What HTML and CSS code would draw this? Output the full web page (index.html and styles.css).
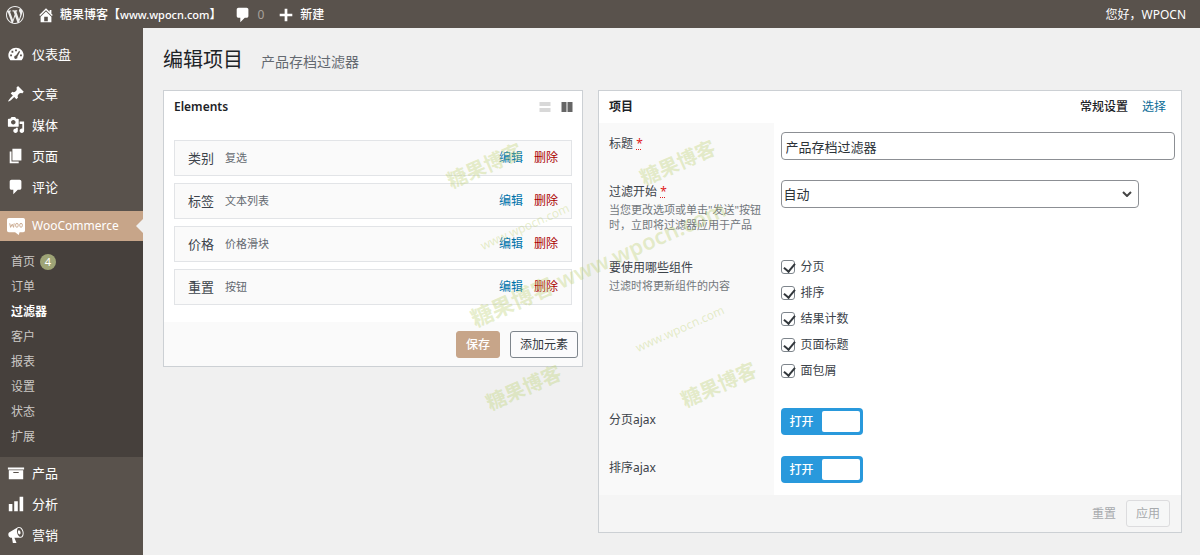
FILE: index.html
```html
<!DOCTYPE html>
<html lang="zh-CN">
<head>
<meta charset="utf-8">
<title>编辑项目</title>
<link rel="stylesheet" href="styles.css">
</head>
<body>
<header class="topbar">
  <a class="topbar-item" href="#" aria-label="WordPress"><svg class="wp-logo" viewBox="0 0 20 20"><path d="M20 10c0-5.51-4.49-10-10-10C4.48 0 0 4.49 0 10c0 5.52 4.48 10 10 10 5.51 0 10-4.48 10-10zM7.78 15.37L4.37 6.22c.55-.02 1.17-.08 1.17-.08.5-.06.44-1.13-.06-1.11 0 0-1.45.11-2.37.11-.18 0-.37 0-.58-.01C4.12 2.69 6.87 1.11 10 1.11c2.33 0 4.45.87 6.05 2.34-.68-.11-1.65.39-1.65 1.58 0 .74.45 1.36.9 2.1.35.61.55 1.36.55 2.46 0 1.49-1.4 5-1.4 5l-3.03-8.37c.54-.02.82-.17.82-.17.5-.05.44-1.25-.06-1.22 0 0-1.44.12-2.38.12-.87 0-2.33-.12-2.33-.12-.5-.03-.56 1.2-.06 1.22l.92.08 1.26 3.41zM17.41 10c.24-.64.74-1.87.43-4.25.7 1.29 1.05 2.71 1.05 4.25 0 3.29-1.73 6.24-4.4 7.78.97-2.59 1.94-5.2 2.92-7.78zM6.1 18.09C3.12 16.65 1.11 13.53 1.11 10c0-1.3.23-2.48.72-3.59C3.25 10.3 4.67 14.2 6.1 18.09zm4.03-6.63l2.58 6.98c-.86.29-1.76.45-2.71.45-.79 0-1.57-.11-2.29-.33.81-2.38 1.62-4.74 2.42-7.1z"/></svg></a>
  <a class="topbar-item" href="#"><svg class="icon" viewBox="0 0 20 20"><path d="M16 8.5l1.53 1.53-1.06 1.06L10 4.6l-6.47 6.49-1.06-1.06L10 2.5l4 4v-2h2v4zm-6-2.46l6 5.99V18H4v-5.97zM12 17v-5H8v5h4z"/></svg><span>糖果博客【<span class="domain">www.wpocn.com</span>】</span></a>
  <a class="topbar-item topbar-comments" href="#"><svg class="icon" viewBox="0 0 20 20"><path d="M5 2h9c1.1 0 2 .9 2 2v7c0 1.1-.9 2-2 2h-2l-5 5v-5H5c-1.1 0-2-.9-2-2V4c0-1.1.9-2 2-2z"/></svg><span class="count">0</span></a>
  <a class="topbar-item" href="#"><svg class="icon" viewBox="0 0 20 20"><path d="M8.500 3h3v5.500H17v3h-5.500V17h-3v-5.500H3v-3h5.500z"/></svg>新建</a>
  <a class="topbar-item topbar-user" href="#">您好，WPOCN</a>
</header>
<div class="layout">
  <nav class="sidebar">
    <ul class="menu">
      <li><a class="menu-link" href="#"><svg class="icon" viewBox="0 0 20 20"><path fill-rule="evenodd" d="M3.760 17h12.480A8.500 8.500 0 0 0 18.500 11.500C18.500 6.700 14.700 3 10 3S1.500 6.700 1.500 11.500c0 2.100.9 4 2.260 5.500zM9 5h2v2H9zM5 6.500h2v2H5zM13.500 6.500l1 1-3 5.500a1.800 1.800 0 1 1-1.500-1.200zM3.500 10.500h2v2h-2zM14.500 10.500h2v2h-2z"/></svg>仪表盘</a></li>
      <li class="gap-top"><a class="menu-link" href="#"><svg class="icon" viewBox="0 0 20 20"><path d="M10.440 3.020l1.820-1.820 6.360 6.350-1.830 1.820c-1.050-.68-2.480-.57-3.410.36l-.75.75c-.92.93-1.040 2.350-.35 3.410l-1.830 1.820-2.410-2.410-2.800 2.790c-.42.42-3.380 2.710-3.800 2.290s1.860-3.390 2.280-3.810l2.790-2.790L4.100 9.360l1.830-1.820c1.050.69 2.480.57 3.400-.36l.75-.75c.93-.92 1.050-2.350.36-3.410z"/></svg>文章</a></li>
      <li><a class="menu-link" href="#"><svg class="icon" viewBox="0 0 20 20"><path d="M13 11V4c0-.55-.45-1-1-1h-1.670L9 1H5L3.670 3H2c-.55 0-1 .45-1 1v7c0 .55.45 1 1 1h10c.55 0 1-.45 1-1zM7 4.500c1.380 0 2.500 1.120 2.500 2.500S8.380 9.500 7 9.500 4.500 8.380 4.500 7 5.620 4.500 7 4.500zM14 6h5v10.500c0 1.380-1.120 2.500-2.500 2.500S14 17.880 14 16.500s1.120-2.500 2.500-2.500c.17 0 .34.02.5.05V9h-3V6zm-4 8.050V13h2v3.500c0 1.380-1.120 2.500-2.500 2.500S7 17.880 7 16.500 8.120 14 9.500 14c.17 0 .34.02.5.05z"/></svg>媒体</a></li>
      <li><a class="menu-link" href="#"><svg class="icon" viewBox="0 0 20 20"><path d="M6 15V2h10v13H6zm-1 1h8v2H3V5h2v11z"/></svg>页面</a></li>
      <li><a class="menu-link" href="#"><svg class="icon" viewBox="0 0 20 20"><path d="M5 2h9c1.100 0 2 .9 2 2v7c0 1.100-.9 2-2 2h-2l-5 5v-5H5c-1.100 0-2-.9-2-2V4c0-1.100.9-2 2-2z"/></svg>评论</a></li>
      <li class="gap-top">
        <a class="menu-link current" href="#"><svg class="icon" viewBox="0 0 20 20"><path d="M2 1h16q2 0 2 2v12q0 2-2 2h-4l-1 3-4-3H2q-2 0-2-2V3q0-2 2-2z"/><path class="woo-mark" d="M3 7l1 4.500 1.800-3.500 1.500 3.500L8 7"/><ellipse class="woo-mark" cx="11" cy="9.200" rx="1.500" ry="2.200"/><ellipse class="woo-mark" cx="15.600" cy="9.200" rx="1.500" ry="2.200"/></svg>WooCommerce</a>
        <ul class="submenu">
          <li><a href="#">首页<span class="badge">4</span></a></li>
          <li><a href="#">订单</a></li>
          <li><a class="selected" href="#">过滤器</a></li>
          <li><a href="#">客户</a></li>
          <li><a href="#">报表</a></li>
          <li><a href="#">设置</a></li>
          <li><a href="#">状态</a></li>
          <li><a href="#">扩展</a></li>
        </ul>
      </li>
      <li><a class="menu-link" href="#"><svg class="icon" viewBox="0 0 20 20"><path d="M19 4v2H1V4h18zM2 7h16v10H2V7zm11 3V9H7v1h6z"/></svg>产品</a></li>
      <li><a class="menu-link" href="#"><svg class="icon" viewBox="0 0 20 20"><path d="M18 18V2h-4v16h4zm-6 0V7H8v11h4zm-6 0v-8H2v8h4z"/></svg>分析</a></li>
      <li><a class="menu-link" href="#"><svg class="icon" viewBox="0 0 20 20"><path d="M18.150 5.940c.46 1.620.38 3.220-.02 4.480-.42 1.280-1.260 2.180-2.300 2.480-.16.06-.26.06-.4.06-.06.02-.12.02-.18.02-.06.02-.14.02-.22.02h-6.800l2.220 5.500c.02.14-.06.26-.14.34-.08.1-.24.16-.34.16H6.950c-.1 0-.26-.06-.34-.16-.08-.08-.16-.2-.14-.34l-1-5.500H4.250l-.02-.02c-.5.06-1.080-.18-1.540-.62s-.88-1.080-1.060-1.880c-.24-.8-.2-1.560-.02-2.200.18-.62.58-1.080 1.060-1.300l.02-.02 9-5.400c.1-.06.18-.1.24-.16.06-.04.14-.08.24-.12.16-.08.28-.12.5-.18 1.040-.3 2.240.1 3.220.98s1.840 2.240 2.260 3.860zm-2.580 5.980h-.02c.4-.1.74-.34 1.040-.7.58-.7.86-1.760.86-3.040 0-.64-.1-1.300-.28-1.980-.34-1.360-1.020-2.500-1.780-3.240s-1.680-1.100-2.460-.88c-.82.22-1.400.96-1.700 2-.32 1.040-.28 2.360.06 3.720.38 1.360 1 2.500 1.800 3.240.78.740 1.620 1.100 2.480.88zm-2.540-7.080c.22-.04.42-.02.62.04.38.16.76.48 1.020 1s.42 1.200.42 1.780c0 .3-.04.56-.12.8-.18.48-.44.84-.86.94-.34.1-.8-.06-1.140-.4s-.64-.86-.78-1.500c-.18-.62-.12-1.240.02-1.720s.48-.84.82-.94z"/></svg>营销</a></li>
    </ul>
  </nav>
  <main class="content">
    <div class="page-head">
      <h1>编辑项目</h1>
      <span class="page-name">产品存档过滤器</span>
    </div>
    <div class="panels">
      <section class="panel">
        <div class="panel-head">
          <h2>Elements</h2>
          <div class="view-switch">
            <button type="button" class="view" aria-label="单列"><svg viewBox="0 0 11 10"><path d="M0 0h11v4H0zM0 6h11v4H0z"/></svg></button>
            <button type="button" class="view view-on" aria-label="双列"><svg viewBox="0 0 11 10"><path d="M0 0h5v10H0zM6 0h5v10H6z"/></svg></button>
          </div>
        </div>
        <ul class="elements">
          <li class="element"><span class="element-name">类别</span><span class="element-type">复选</span><a class="edit" href="#">编辑</a><a class="remove" href="#">删除</a></li>
          <li class="element"><span class="element-name">标签</span><span class="element-type">文本列表</span><a class="edit" href="#">编辑</a><a class="remove" href="#">删除</a></li>
          <li class="element"><span class="element-name">价格</span><span class="element-type">价格滑块</span><a class="edit" href="#">编辑</a><a class="remove" href="#">删除</a></li>
          <li class="element"><span class="element-name">重置</span><span class="element-type">按钮</span><a class="edit" href="#">编辑</a><a class="remove" href="#">删除</a></li>
        </ul>
        <div class="panel-foot">
          <button type="button" class="btn btn-primary">保存</button>
          <button type="button" class="btn">添加元素</button>
        </div>
      </section>
      <form class="panel">
        <div class="panel-head">
          <h2>项目</h2>
          <div class="tabs"><a class="tab-on" href="#">常规设置</a><a href="#">选择</a></div>
        </div>
        <div class="row">
          <div class="row-label"><label for="title">标题 <abbr title="必填">*</abbr></label></div>
          <div class="row-field"><input class="text" id="title" type="text" value="产品存档过滤器"></div>
        </div>
        <div class="row row-select">
          <div class="row-label"><label for="start">过滤开始 <abbr title="必填">*</abbr></label><p>当您更改选项或单击"发送"按钮时，立即将过滤器应用于产品</p></div>
          <div class="row-field select-field"><select class="text" id="start"><option>自动</option></select><svg class="chevron" viewBox="0 0 10 6"><path d="M1 1l4 4 4-4"/></svg></div>
        </div>
        <div class="row row-checks" role="group" aria-labelledby="parts">
          <div class="row-label"><span id="parts">要使用哪些组件</span><p>过滤时将更新组件的内容</p></div>
          <div class="row-field">
            <label class="check"><input type="checkbox" checked>分页</label>
            <label class="check"><input type="checkbox" checked>排序</label>
            <label class="check"><input type="checkbox" checked>结果计数</label>
            <label class="check"><input type="checkbox" checked>页面标题</label>
            <label class="check"><input type="checkbox" checked>面包屑</label>
          </div>
        </div>
        <div class="row">
          <div class="row-label"><label for="paging">分页ajax</label></div>
          <div class="row-field"><label class="toggle">打开<input id="paging" type="checkbox" checked></label></div>
        </div>
        <div class="row">
          <div class="row-label"><label for="sorting">排序ajax</label></div>
          <div class="row-field"><label class="toggle">打开<input id="sorting" type="checkbox" checked></label></div>
        </div>
        <div class="panel-foot foot-settings">
          <button type="button" class="btn-text" disabled>重置</button>
          <button type="button" class="btn" disabled>应用</button>
        </div>
      </form>
    </div>
  </main>
</div>
<div class="marks" aria-hidden="true">
  <span class="mark mark-a">糖果博客</span>
  <span class="mark mark-b">糖果博客</span>
  <span class="mark mark-c">糖果博客 www.wpocn.com</span>
  <span class="mark mark-d">糖果博客</span>
  <span class="mark mark-e">糖果博客</span>
  <span class="mark mark-small mark-f">www.wpocn.com</span>
  <span class="mark mark-small mark-g">www.wpocn.com</span>
</div>
</body>
</html>
```
FILE: styles.css
```css
* { box-sizing: border-box; }
body {
  margin: 0;
  min-height: 100vh;
  display: flex;
  flex-direction: column;
  position: relative;
  background: #f0f0f0;
  color: #3c434a;
  font: 12px/16px "Noto Sans", "Noto Sans CJK SC", sans-serif;
}
ul, h1, h2, p { margin: 0; padding: 0; }
ul { list-style: none; }
a { color: inherit; text-decoration: none; }
button, input, select { font: inherit; color: inherit; margin: 0; }

.icon { width: 18px; height: 18px; flex: none; fill: #fff; }

.topbar {
  display: flex;
  align-items: center;
  gap: 13px;
  height: 28px;
  padding: 0 14px 0 6px;
  background: #59524c;
  color: #fff;
}
.topbar-item { display: flex; align-items: center; gap: 5px; padding-top: 1px; font-weight: 500; }
.topbar-user { margin-left: auto; font-weight: 400; }
.domain { font-size: 11px; }
.wp-logo { width: 18px; height: 18px; fill: #eee; }
.count { color: #a8a29c; font-weight: 400; }

.layout { flex: 1; display: flex; }
.sidebar { flex: none; width: 143px; background: #59524c; }
.menu { padding-top: 10px; }
.gap-top { padding-top: 9px; }
.menu-link {
  display: flex;
  align-items: center;
  gap: 7px;
  height: 31px;
  padding-left: 7px;
  color: #fff;
  font-size: 13px;
}
.current { position: relative; height: 30px; background: #c7a589; font-size: 12px; }
.current::after {
  content: "";
  position: absolute;
  right: 0;
  top: 8px;
  border: 7px solid transparent;
  border-left: 0;
  border-right-color: #f0f0f0;
}
.woo-mark { fill: none; stroke: #c7a589; stroke-width: 1; }
.submenu { padding: 8px 0; background: #46403c; color: #cbc8c5; }
.submenu a { display: flex; align-items: center; gap: 5px; height: 25px; padding-left: 11px; }
.submenu .selected { color: #fff; font-weight: 700; }
.badge {
  width: 16px;
  height: 16px;
  border-radius: 8px;
  background: #9ea476;
  color: #fff;
  font-size: 11px;
  text-align: center;
}

.content { flex: 1; padding: 17px 18px 22px 20px; }
.page-head { display: flex; align-items: baseline; gap: 18px; height: 45px; }
.page-head h1 { color: #1d2327; font-size: 20px; line-height: 30px; font-weight: 400; }
.page-name { color: #646970; font-size: 14px; }
.panels { display: grid; grid-template-columns: 420fr 584fr; gap: 15px; align-items: start; }
.panel { border: 1px solid #ccd0d4; background: #fff; min-width: 0; }
.panel-head {
  display: flex;
  align-items: center;
  justify-content: space-between;
  height: 32px;
  padding: 0 15px 0 10px;
}
.panel-head h2 { color: #1d2327; font-size: 12px; font-weight: 600; }
.view-switch { display: flex; gap: 10px; margin-right: -6px; }
.view { display: flex; padding: 0; border: 0; background: none; }
.view svg { width: 12px; height: 10px; fill: #d8d8d8; }
.view-on svg { fill: #666; }
.tabs { display: flex; gap: 14px; color: #0a6b96; }
.tab-on { color: #1d2327; font-weight: 500; }

.elements { display: grid; gap: 7px; padding: 17px 10px; }
.element {
  display: flex;
  align-items: center;
  gap: 11px;
  height: 36px;
  padding: 0 13px;
  border: 1px solid #e2e4e7;
  background: #fafafa;
}
.element-name { font-size: 13px; }
.element-type { flex: 1; font-size: 11px; color: #646970; }
.edit { color: #0073aa; }
.remove { color: #a00; }

.panel-foot {
  display: flex;
  align-items: center;
  justify-content: flex-end;
  gap: 10px;
  padding: 9px 4px 8px;
  background: #fafafa;
}
.btn {
  height: 27px;
  padding: 0 9px;
  border: 1px solid #7e858c;
  border-radius: 3px;
  background: #fbfbfc;
  color: #32373c;
}
.btn-primary { border-color: #c7a589; background: #c7a589; color: #fff; font-weight: 500; }
.foot-settings { padding: 5px 11px 5px; background: #f5f5f5; }
.btn:disabled { border-color: #dcdcde; background: #f6f7f7; color: #a7aaad; }
.btn-text { padding: 0; border: 0; background: none; }
.btn-text:disabled { color: #a7aaad; }

.row { display: grid; grid-template-columns: 30% 1fr; min-height: 48px; }
.row-label { padding: 13px 8px 0 10px; background: #f9f9f9; }
.row-field { padding: 9px 6px 0 7px; }
.row-label abbr { color: #e02020; text-decoration: underline dotted; }
.row-label p { margin-top: 2px; color: #72777c; font-size: 11px; line-height: 15px; }
.row-select { min-height: 76px; }
.row-checks { min-height: 152px; }
.row-checks .row-field { padding-top: 7px; }
.text {
  display: block;
  width: 100%;
  height: 28px;
  padding: 0 4px;
  border: 1px solid #8c8f94;
  border-radius: 4px;
  background: #fff;
  color: #2c3338;
  font-size: 13px;
}
.select-field { display: flex; align-items: flex-start; padding-right: 42px; }
select.text { appearance: none; padding: 0 2px; }
.chevron {
  flex: none;
  width: 10px;
  height: 6px;
  margin: 11px 7px 0 -17px;
  fill: none;
  stroke: #444;
  stroke-width: 2;
  pointer-events: none;
}
.check { display: flex; align-items: center; gap: 6px; height: 26px; }
.check input {
  appearance: none;
  width: 14px;
  height: 14px;
  border: 1px solid #7e858c;
  border-radius: 3px;
}
.check input:checked::before {
  content: "";
  display: block;
  width: 5px;
  height: 9px;
  margin-left: 4px;
  border: solid #32373c;
  border-width: 0 2px 2px 0;
  transform: rotate(40deg);
}
.toggle {
  display: inline-flex;
  align-items: center;
  gap: 8px;
  height: 27px;
  padding: 0 3px 0 9px;
  border-radius: 4px;
  background: #2999dc;
  color: #fff;
  font-weight: 500;
}
.toggle input { appearance: none; width: 38px; height: 21px; border-radius: 2px; background: #fff; }

.marks { position: absolute; inset: 0; overflow: hidden; pointer-events: none; }
.mark {
  position: absolute;
  color: rgba(186, 208, 110, 0.36);
  font-size: 20px;
  line-height: 24px;
  font-weight: 700;
  white-space: nowrap;
  transform: translate(-50%, -50%) rotate(-24deg);
}
.mark-small { font-size: 12px; font-weight: 400; }
.mark-a { left: 485px; top: 166px; }
.mark-b { left: 678px; top: 163px; }
.mark-c { left: 598px; top: 263px; font-size: 22px; font-weight: 600; }
.mark-d { left: 524px; top: 388px; }
.mark-e { left: 719px; top: 385px; }
.mark-f { left: 525px; top: 227px; }
.mark-g { left: 680px; top: 329px; }
```
